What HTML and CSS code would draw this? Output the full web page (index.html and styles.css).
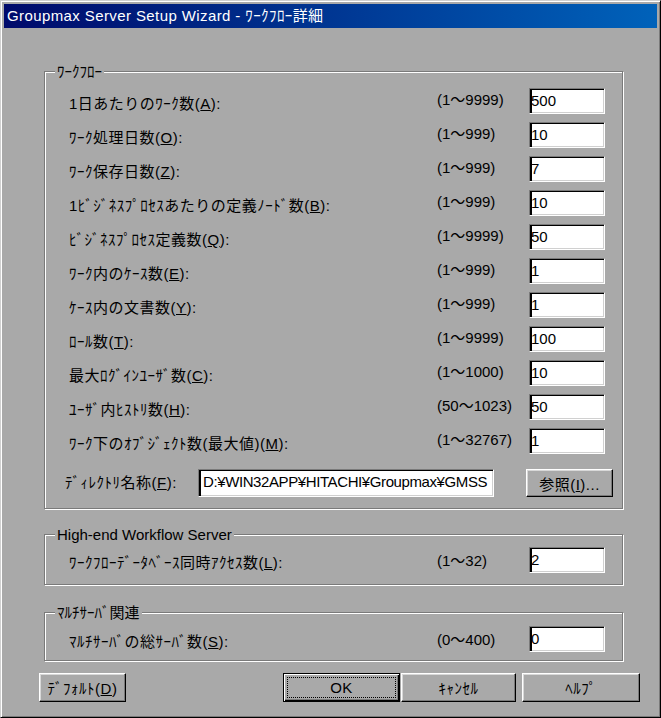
FILE: index.html
```html
<!DOCTYPE html>
<html lang="ja">
<head>
<meta charset="utf-8">
<title>Groupmax Server Setup Wizard - ﾜｰｸﾌﾛｰ詳細</title>
<link rel="stylesheet" href="styles.css">
</head>
<body>
<div class="window">
  <div class="titlebar">Groupmax Server Setup Wizard - ﾜｰｸﾌﾛｰ詳細</div>
  <div class="client">
    <section class="group">
      <div class="group-title">ﾜｰｸﾌﾛｰ</div>
      <div class="group-body body-workflow">
        <div class="fields">
          <label class="lbl">1日あたりのﾜｰｸ数(<u>A</u>):</label><span class="range">(1～9999)</span><input class="edit" type="text" value="500">
          <label class="lbl">ﾜｰｸ処理日数(<u>O</u>):</label><span class="range">(1～999)</span><input class="edit" type="text" value="10">
          <label class="lbl">ﾜｰｸ保存日数(<u>Z</u>):</label><span class="range">(1～999)</span><input class="edit" type="text" value="7">
          <label class="lbl">1ﾋﾞｼﾞﾈｽﾌﾟﾛｾｽあたりの定義ﾉｰﾄﾞ数(<u>B</u>):</label><span class="range">(1～999)</span><input class="edit" type="text" value="10">
          <label class="lbl">ﾋﾞｼﾞﾈｽﾌﾟﾛｾｽ定義数(<u>Q</u>):</label><span class="range">(1～9999)</span><input class="edit" type="text" value="50">
          <label class="lbl">ﾜｰｸ内のｹｰｽ数(<u>E</u>):</label><span class="range">(1～999)</span><input class="edit" type="text" value="1">
          <label class="lbl">ｹｰｽ内の文書数(<u>Y</u>):</label><span class="range">(1～999)</span><input class="edit" type="text" value="1">
          <label class="lbl">ﾛｰﾙ数(<u>T</u>):</label><span class="range">(1～9999)</span><input class="edit" type="text" value="100">
          <label class="lbl">最大ﾛｸﾞｲﾝﾕｰｻﾞ数(<u>C</u>):</label><span class="range">(1～1000)</span><input class="edit" type="text" value="10">
          <label class="lbl">ﾕｰｻﾞ内ﾋｽﾄﾘ数(<u>H</u>):</label><span class="range">(50～1023)</span><input class="edit" type="text" value="50">
          <label class="lbl">ﾜｰｸ下のｵﾌﾞｼﾞｪｸﾄ数(最大値)(<u>M</u>):</label><span class="range">(1～32767)</span><input class="edit" type="text" value="1">
        </div>
        <div class="dir-row">
          <label class="lbl dir-lbl">ﾃﾞｨﾚｸﾄﾘ名称(<u>F</u>):</label>
          <input class="edit dir-edit" type="text" value="D:¥WIN32APP¥HITACHI¥Groupmax¥GMSS">
          <button class="btn browse" type="button">参照(<u>I</u>)...</button>
        </div>
      </div>
    </section>

    <section class="group group-highend">
      <div class="group-title">High-end Workflow Server</div>
      <div class="group-body body-highend">
        <div class="fields fields-aux">
          <label class="lbl">ﾜｰｸﾌﾛｰﾃﾞｰﾀﾍﾞｰｽ同時ｱｸｾｽ数(<u>L</u>):</label><span class="range">(1～32)</span><input class="edit" type="text" value="2">
        </div>
      </div>
    </section>

    <section class="group group-multi">
      <div class="group-title">ﾏﾙﾁｻｰﾊﾞ関連</div>
      <div class="group-body body-multi">
        <div class="fields fields-aux">
          <label class="lbl">ﾏﾙﾁｻｰﾊﾞの総ｻｰﾊﾞ数(<u>S</u>):</label><span class="range">(0～400)</span><input class="edit" type="text" value="0">
        </div>
      </div>
    </section>

    <div class="buttons">
      <button class="btn btn-defaults" type="button">ﾃﾞﾌｫﾙﾄ(<u>D</u>)</button>
      <button class="btn btn-ok" type="button"><span class="focus">OK</span></button>
      <button class="btn btn-cancel" type="button">ｷｬﾝｾﾙ</button>
      <button class="btn btn-help" type="button">ﾍﾙﾌﾟ</button>
    </div>
  </div>
</div>
</body>
</html>
```

FILE: styles.css
```css
* { box-sizing: border-box; }

html, body { margin: 0; padding: 0; }

body {
  width: 661px;
  height: 718px;
  overflow: hidden;
  background: #a9a9a9;
  font-family: "Liberation Sans", "Noto Sans CJK JP", sans-serif;
  font-size: 15px;
  color: #000;
}

.window {
  width: 661px;
  height: 718px;
  background: #a9a9a9;
  border: 1px solid;
  border-color: #d0d0d0 #000 #000 #d0d0d0;
  box-shadow: inset 1px 1px 0 #fff, inset -1px -1px 0 #7a7a7a;
  padding: 3px 3px 0 3px;
}

.titlebar {
  height: 24px;
  line-height: 24px;
  padding-left: 3px;
  background: linear-gradient(to right, #000a6b, #0062ba);
  color: #fff;
  white-space: nowrap;
  letter-spacing: 0.4px;
}

.client {
  padding: 43px 0 0 35px;
}

.group {
  width: 579px;
  margin-left: 5px;
  border: 1px solid #7a7a7a;
  box-shadow: inset 1px 1px 0 #fff, 1px 1px 0 #fff;
}

.group-highend { margin-top: 25px; }
.group-multi { margin-top: 27px; }

.group-title {
  width: fit-content;
  margin: -8px 0 0 10px;
  padding: 0 2px;
  line-height: 16px;
  background: #a9a9a9;
  white-space: nowrap;
}

.group-body { padding-left: 24px; }
.body-workflow { padding-top: 8px; padding-bottom: 11px; }
.body-highend { padding-top: 4px; padding-bottom: 11px; }
.body-multi { padding-top: 5px; padding-bottom: 8px; }

.fields {
  display: grid;
  grid-template-columns: 368px 92px 76px;
  grid-auto-rows: 26px;
  row-gap: 8px;
  align-items: start;
}

.lbl {
  padding-top: 5px;
  line-height: 22px;
  white-space: nowrap;
  letter-spacing: 0.5px;
}

.range {
  padding-top: 1px;
  line-height: 22px;
  white-space: nowrap;
}

.fields-aux .range { padding-top: 3px; }

.edit {
  width: 76px;
  height: 26px;
  margin: 0;
  padding: 2px 0 4px 1px;
  border: 1px solid;
  border-color: #7a7a7a #fff #fff #7a7a7a;
  box-shadow: inset 2px 1px 0 #000, inset -1px -1px 0 #d0d0d0;
  background: #fff;
  color: #000;
  font: inherit;
  line-height: 18px;
  outline: none;
}

.dir-row {
  display: flex;
  align-items: flex-start;
  margin: 15px 0 0 -4px;
}

.dir-lbl {
  width: 133px;
  padding-top: 3px;
}

.dir-edit {
  width: 296px;
  height: 28px;
  padding: 2px 0 6px 4px;
  letter-spacing: -0.4px;
}

.btn {
  height: 29px;
  margin: 0;
  padding: 0;
  font: inherit;
  letter-spacing: 0.5px;
  color: #000;
  background: #a9a9a9;
  border: 1px solid;
  border-color: #fff #000 #000 #fff;
  box-shadow: inset -1px -1px 0 #7a7a7a, inset 1px 1px 0 #d8d8d8;
  white-space: nowrap;
}

.browse {
  width: 87px;
  height: 28px;
  margin-left: 32px;
}

.buttons {
  display: flex;
  margin-top: 12px;
}

.btn-defaults { width: 87px; }

.btn-ok {
  width: 117px;
  margin-left: 157px;
  padding: 3px;
  display: flex;
  border: 1px solid #000;
  box-shadow: inset 1px 1px 0 #fff, inset -1px -1px 0 #000, inset -2px -2px 0 #7a7a7a;
}

.focus {
  flex: 1;
  display: flex;
  align-items: center;
  justify-content: center;
  border: 1px dotted #000;
}

.btn-cancel { width: 115px; margin-left: 1px; }
.btn-help { width: 118px; margin-left: 6px; }
```
